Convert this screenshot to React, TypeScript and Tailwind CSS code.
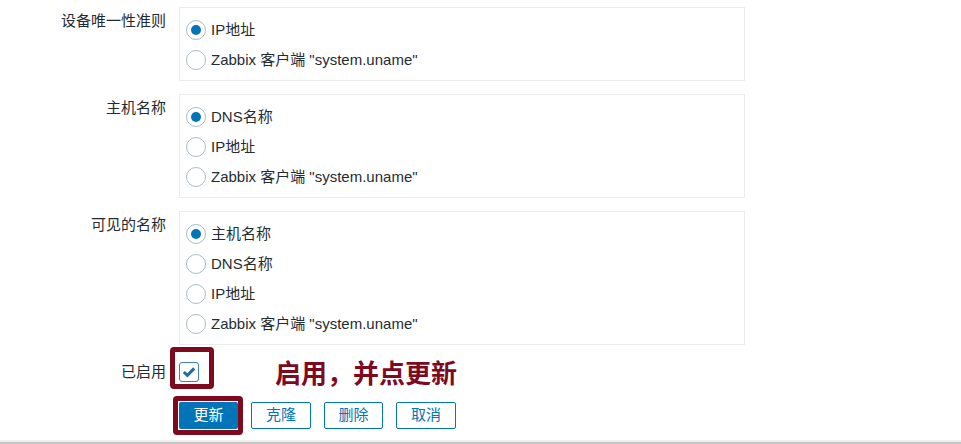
import React from 'react';

type Group = {
  label: string;
  options: string[];
  selected: number;
};

const groups: Group[] = [
  { label: '设备唯一性准则', options: ['IP地址', 'Zabbix 客户端 "system.uname"'], selected: 0 },
  { label: '主机名称', options: ['DNS名称', 'IP地址', 'Zabbix 客户端 "system.uname"'], selected: 0 },
  { label: '可见的名称', options: ['主机名称', 'DNS名称', 'IP地址', 'Zabbix 客户端 "system.uname"'], selected: 0 },
];

function Radio({ checked, label }: { checked: boolean; label: string }) {
  return (
    <div className="flex h-[30px] items-center">
      <span className="ml-[6px] flex h-[20px] w-[20px] items-center justify-center rounded-full border border-[#acbbc4] bg-white">
        {checked && <span className="h-[10px] w-[10px] rounded-full bg-[#0275b8]" />}
      </span>
      <span className="ml-[5px]">{label}</span>
    </div>
  );
}

function FormRow({ label, children }: { label: string; children: React.ReactNode }) {
  return (
    <div className="flex gap-[13px]">
      <div className="w-[166px] pt-[5px] text-right leading-[18px]">{label}</div>
      {children}
    </div>
  );
}

export default function App() {
  return (
    <div
      className="min-h-[444px] bg-white text-[15px] text-[#1f2c33]"
      style={{ fontFamily: '"Liberation Sans", Arial, "Noto Sans CJK SC", sans-serif' }}
    >
      <div className="flex flex-col gap-[13px] pt-[7px]">
        {groups.map((g) => (
          <FormRow key={g.label} label={g.label}>
            <div className="w-[566px] border border-[#ebebeb] pb-[5px] pt-[7px]">
              {g.options.map((o, i) => (
                <Radio key={o} checked={i === g.selected} label={o} />
              ))}
            </div>
          </FormRow>
        ))}
      </div>

      {/* Enabled */}
      <div className="mt-[14px] flex items-center gap-[13px]">
        <div className="w-[166px] text-right leading-[18px]">已启用</div>
        <div className="relative h-[20px] w-[20px]">
          <span className="flex h-[20px] w-[20px] items-center justify-center rounded-[3px] border border-[#3e7fab] bg-white">
            <svg width="16" height="16" viewBox="0 0 16 16">
              <path d="M2.8 8 L6.4 11.4 L13.2 4.4" fill="none" stroke="#1f6fa6" strokeWidth="3" />
            </svg>
          </span>
          <span className="absolute left-[-9px] right-[-15px] top-[-15px] bottom-[-7px] rounded-[4px] border-[5px] border-[#7e0a1e]" />
        </div>
        <span
          className="ml-[63px] text-[26px] font-bold leading-none text-[#7e0a1e]"
          style={{ fontFamily: '"Noto Sans CJK SC", sans-serif' }}
        >
          启用，并点更新
        </span>
      </div>

      {/* Buttons */}
      <div className="mt-[17px] flex gap-[13px] pl-[179px]">
        <div className="relative">
          <button className="h-[27px] w-[59px] rounded-[2px] bg-[#0275b8] text-white">更新</button>
          <span className="absolute left-[-6px] right-[-5px] top-[-6px] bottom-[-6px] rounded-[4px] border-[5px] border-[#7e0a1e]" />
        </div>
        <button className="h-[27px] w-[60px] rounded-[2px] border border-[#0275b8] bg-white text-[#0275b8]">克隆</button>
        <button className="h-[27px] w-[59px] rounded-[2px] border border-[#0275b8] bg-white text-[#0275b8]">删除</button>
        <button className="h-[27px] w-[60px] rounded-[2px] border border-[#0275b8] bg-white text-[#0275b8]">取消</button>
      </div>

      <div className="mt-[11px] h-[2px] bg-[#f0f0f0]" />
      <div className="h-[4px] bg-[#c4c4c4]" />
    </div>
  );
}
